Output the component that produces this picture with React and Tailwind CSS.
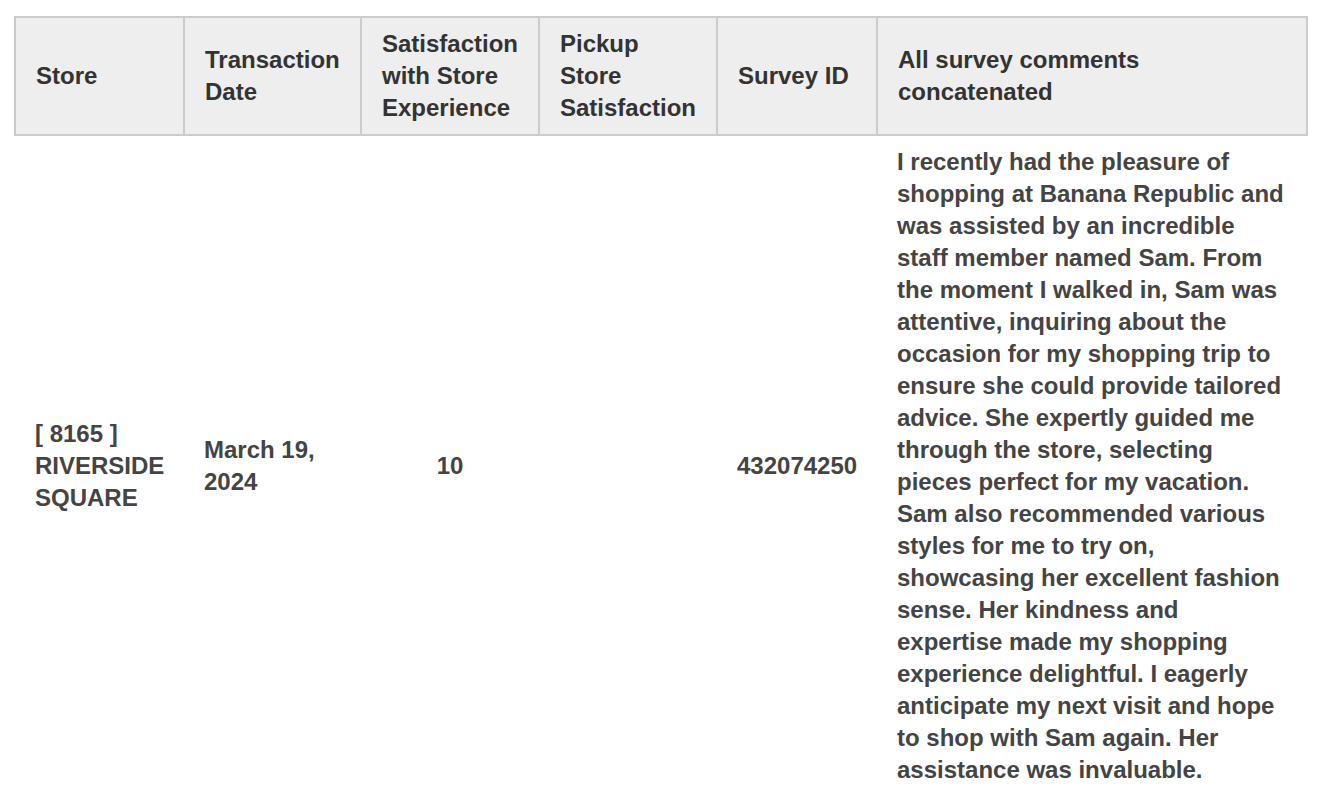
import React from 'react';

const columns = [
  { label: 'Store', width: 'w-[169px]' },
  { label: 'Transaction Date', width: 'w-[177px]' },
  { label: 'Satisfaction with Store Experience', width: 'w-[178px]' },
  { label: 'Pickup Store Satisfaction', width: 'w-[178px]' },
  { label: 'Survey ID', width: 'w-[160px]' },
  { label: 'All survey comments concatenated', width: 'w-[430px]' },
];

const comment =
  'I recently had the pleasure of shopping at Banana Republic and was assisted by an incredible staff member named Sam. From the moment I walked in, Sam was attentive, inquiring about the occasion for my shopping trip to ensure she could provide tailored advice. She expertly guided me through the store, selecting pieces perfect for my vacation. Sam also recommended various styles for me to try on, showcasing her excellent fashion sense. Her kindness and expertise made my shopping experience delightful. I eagerly anticipate my next visit and hope to shop with Sam again. Her assistance was invaluable.';

const App = () => {
  return (
    <div className="min-h-screen bg-white pt-[16px] pl-[14px] font-['Liberation_Sans',Arial,sans-serif] text-[24px] font-bold leading-8">
      <table className="table-fixed border-collapse w-[1292px]">
        <colgroup>
          {columns.map(col => (
            <col key={col.label} className={col.width} />
          ))}
        </colgroup>
        <thead>
          <tr className="bg-[#eeeeee]">
            {columns.map(col => (
              <th
                key={col.label}
                className="border-2 border-[#cccccc] px-5 py-[10px] text-left align-middle font-bold text-[#333333]"
              >
                {col.label}
              </th>
            ))}
          </tr>
        </thead>
        <tbody>
          <tr className="text-[#444444]">
            <td className="px-5 py-[10px] align-middle">[ 8165 ] RIVERSIDE SQUARE</td>
            <td className="px-5 py-[10px] align-middle">March 19, 2024</td>
            <td className="px-5 py-[10px] align-middle text-center">10</td>
            <td className="px-5 py-[10px] align-middle"></td>
            <td className="px-5 py-[10px] align-middle">432074250</td>
            <td className="px-5 py-[10px] align-middle">{comment}</td>
          </tr>
        </tbody>
      </table>
    </div>
  );
};

export default App;
